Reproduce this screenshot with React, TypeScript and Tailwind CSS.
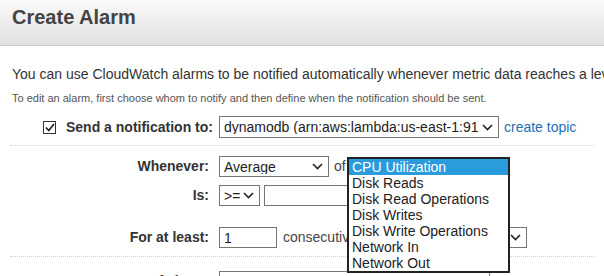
import React from 'react'

const metrics = [
  'CPU Utilization',
  'Disk Reads',
  'Disk Read Operations',
  'Disk Writes',
  'Disk Write Operations',
  'Network In',
  'Network Out',
]

const Chevron = () => (
  <svg width="11" height="7" viewBox="0 0 11 7" className="shrink-0">
    <path d="M1 1 L5.5 5.5 L10 1" fill="none" stroke="#222" strokeWidth="1.6" />
  </svg>
)

const FakeSelect: React.FC<{ value: string; className: string }> = ({ value, className }) => (
  <div
    className={`flex items-center justify-between border border-[#767676] bg-white pl-[4px] pr-[5px] text-[14px] leading-none text-[#222] whitespace-nowrap overflow-hidden ${className}`}
  >
    <span className="overflow-hidden">{value}</span>
    <Chevron />
  </div>
)

const FakeInput: React.FC<{ value?: string; className: string }> = ({ value, className }) => (
  <div
    className={`flex items-center border border-[#767676] bg-white pl-[4px] text-[14px] leading-none text-[#222] whitespace-nowrap overflow-hidden ${className}`}
  >
    {value}
  </div>
)

const Label: React.FC<{ children: React.ReactNode }> = ({ children }) => (
  <div className="w-[210px] shrink-0 text-right text-[14px] font-bold text-[#333] pr-[1px]">{children}</div>
)

export default function App() {
  return (
    <div className="relative w-[604px] h-[276px] overflow-hidden bg-white font-['Liberation_Sans',Arial,sans-serif]">
      {/* header */}
      <div className="h-[46px] border-b border-[#c9c9c9] bg-gradient-to-b from-[#fafafa] to-[#e1e1e1] pl-[12px] pt-[5px]">
        <h1 className="text-[20px] font-bold leading-[24px] text-[#444]">Create Alarm</h1>
      </div>

      <div className="pl-[12px] pt-[20px] whitespace-nowrap">
        <p className="text-[14px] leading-[16px] text-[#333]">
          You can use CloudWatch alarms to be notified automatically whenever metric data reaches a level you define.
        </p>
        <p className="mt-[10px] text-[11px] leading-[12px] text-[#555]">
          To edit an alarm, first choose whom to notify and then define when the notification should be sent.
        </p>
      </div>

      {/* notification row */}
      <div className="mt-[12px] flex items-center whitespace-nowrap">
        <div className="w-[213px] shrink-0 flex items-center justify-end gap-[10px]">
          <div className="w-[13px] h-[13px] border border-[#333] bg-white flex items-center justify-center">
            <svg width="10" height="9" viewBox="0 0 10 9">
              <path d="M1 4.5 L3.8 7.5 L9 1" fill="none" stroke="#222" strokeWidth="1.7" />
            </svg>
          </div>
          <span className="text-[14px] font-bold text-[#333]">Send a notification to:</span>
        </div>
        <FakeSelect value="dynamodb (arn:aws:lambda:us-east-1:91" className="ml-[6px] w-[280px] h-[22px]" />
        <a className="ml-[5px] text-[14px] text-[#1c6fb6]">create topic</a>
      </div>

      <div className="mx-[10px] mt-[7px] border-t border-dotted border-[#cfcfcf]" />

      {/* whenever */}
      <div className="mt-[10px] flex items-center whitespace-nowrap">
        <Label>Whenever:</Label>
        <FakeSelect value="Average" className="ml-[9px] w-[110px] h-[21px]" />
        <span className="ml-[5px] text-[14px] text-[#444]">of</span>
      </div>

      {/* is */}
      <div className="mt-[8px] flex items-center whitespace-nowrap">
        <Label>Is:</Label>
        <FakeSelect value=">=" className="ml-[9px] w-[41px] h-[21px]" />
        <FakeInput className="ml-[4px] w-[120px] h-[21px]" />
      </div>

      {/* for at least */}
      <div className="mt-[21px] flex items-center whitespace-nowrap">
        <Label>For at least:</Label>
        <FakeInput value="1" className="ml-[9px] w-[58px] h-[21px]" />
        <span className="ml-[6px] text-[14px] text-[#444]">consecutive period(s) of</span>
        <FakeSelect value="5 Minutes" className="ml-[5px] w-[90px] h-[21px]" />
      </div>

      <div className="mx-[10px] mt-[8px] border-t border-dotted border-[#cfcfcf]" />

      {/* name */}
      <div className="mt-[14px] flex items-center whitespace-nowrap">
        <Label>Name of alarm:</Label>
        <FakeInput value="awsec2-i-0c6f-Test-1-C-C-High-CPU-Utilization" className="ml-[9px] w-[271px] h-[21px]" />
      </div>

      {/* open metric list */}
      <div className="absolute left-[347px] top-[157px] w-[163px] border-2 border-[#222] bg-white">
        {metrics.map((m, i) => (
          <div
            key={m}
            className={`h-[16px] pl-[3px] text-[14px] leading-[16px] whitespace-nowrap ${
              i === 0 ? 'bg-[#2a9bdc] text-white' : 'text-[#222]'
            }`}
          >
            {m}
          </div>
        ))}
      </div>
    </div>
  )
}
